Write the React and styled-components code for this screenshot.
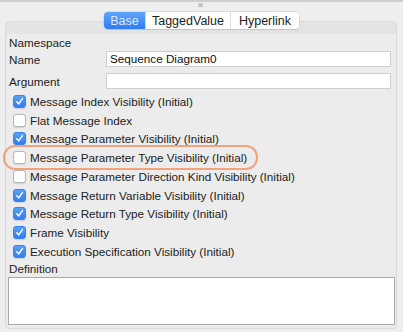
import styled, { createGlobalStyle } from 'styled-components';

const GlobalStyle = createGlobalStyle`
  html, body {
    margin: 0;
    padding: 0;
    background: #eeeeee;
  }
  body {
    font-family: "Liberation Sans", Arial, sans-serif;
    font-size: 11.7px;
    color: #222;
  }
`;

const Window = styled.div`
  width: 403px;
  height: 332px;
  box-sizing: border-box;
  position: relative;
  border-top: 2px solid #cfcfcf;
  background: #eeeeee;
  padding: 10px 6px 4px 5px;
`;

const Knob = styled.div`
  position: absolute;
  left: 198px;
  top: 1px;
  width: 5px;
  height: 4px;
  background: #c4c4c4;
  border-radius: 2px 2px 0 0;
`;

const Panel = styled.div`
  position: relative;
  height: 308px;
  box-sizing: border-box;
  margin-top: 9px;
  border: 1px solid #dadada;
  border-radius: 4px;
  background: linear-gradient(#e4e4e4 0, #e4e4e4 12px, #ececec 12px);
  padding: 13px 1px 3px 2px;
  display: flex;
  flex-direction: column;
`;

const Tabs = styled.div`
  position: absolute;
  top: -10px;
  left: 98px;
  display: flex;
  height: 17px;
  border-radius: 4px;
  background: #fff;
  box-shadow: 0 0 0 0.5px #c8c8c8, 0 1px 1px rgba(0, 0, 0, 0.15);
  overflow: hidden;
`;

const Tab = styled.div`
  display: flex;
  align-items: center;
  justify-content: center;
  width: ${(p) => p.$w}px;
  font-size: 12.5px;
  color: ${(p) => (p.$active ? '#dfeaff' : '#1d1d1d')};
  background: ${(p) => (p.$active ? 'linear-gradient(#5fa4fb, #2f7cf4)' : '#fff')};
  border-left: ${(p) => (p.$first ? 'none' : '1px solid #dcdcdc')};
`;

const Label = styled.div`
  height: 15px;
  line-height: 15px;
  padding-left: 1px;
`;

const FieldRow = styled.div`
  display: grid;
  grid-template-columns: 97px 1fr;
  align-items: center;
  height: 16px;
  margin: 1px 4px 5px 0;
  padding-left: 1px;
`;

const TextBox = styled.div`
  height: 16px;
  box-sizing: border-box;
  background: #fff;
  border: 1px solid #cfcfcf;
  padding: 0 3px;
  line-height: 14px;
  color: #111;
`;

const CheckList = styled.div`
  margin-top: -2px;
  display: flex;
  flex-direction: column;
`;

const CheckRow = styled.div`
  display: flex;
  align-items: center;
  gap: 4px;
  height: 18.75px;
  padding-left: 5px;
`;

const Box = styled.span`
  width: 13px;
  height: 13px;
  box-sizing: border-box;
  border-radius: 3px;
  display: inline-flex;
  align-items: center;
  justify-content: center;
  background: ${(p) => (p.$on ? 'linear-gradient(#5aa0fa, #2f7df5)' : '#fff')};
  border: 1px solid ${(p) => (p.$on ? '#3a83ef' : '#b9b9b9')};
  box-shadow: 0 0.5px 1px rgba(0, 0, 0, 0.12);
`;

const Highlight = styled.div`
  position: absolute;
  left: -3px;
  top: 123px;
  width: 255px;
  height: 25px;
  box-sizing: border-box;
  border: 2.5px solid #f3a27b;
  border-radius: 12px;
  pointer-events: none;
`;

const Definition = styled.div`
  height: 16px;
  line-height: 16px;
  padding-left: 1px;
`;

const TextArea = styled.div`
  flex: 1;
  background: #fff;
  border: 1px solid #a9a9a9;
`;

const checks = [
  ['Message Index Visibility (Initial)', true],
  ['Flat Message Index', false],
  ['Message Parameter Visibility (Initial)', true],
  ['Message Parameter Type Visibility (Initial)', false],
  ['Message Parameter Direction Kind Visibility (Initial)', false],
  ['Message Return Variable Visibility (Initial)', true],
  ['Message Return Type Visibility (Initial)', true],
  ['Frame Visibility', true],
  ['Execution Specification Visibility (Initial)', true],
];

function Check({ on }) {
  return (
    <Box $on={on}>
      {on && (
        <svg width="9" height="9" viewBox="0 0 9 9">
          <path d="M1.8 4.8 L3.7 6.9 L7.4 1.6" fill="none" stroke="#fff" strokeWidth="1.5" strokeLinecap="round" strokeLinejoin="round" />
        </svg>
      )}
    </Box>
  );
}

export default function App() {
  return (
    <>
      <GlobalStyle />
      <Window>
        <Knob />
        <Panel>
          <Tabs>
            <Tab $active $first $w={41}>Base</Tab>
            <Tab $w={84}>TaggedValue</Tab>
            <Tab $w={68}>Hyperlink</Tab>
          </Tabs>
          <Label>Namespace</Label>
          <FieldRow>
            <span>Name</span>
            <TextBox>Sequence Diagram0</TextBox>
          </FieldRow>
          <FieldRow>
            <span>Argument</span>
            <TextBox />
          </FieldRow>
          <CheckList>
            {checks.map(([text, on]) => (
              <CheckRow key={text}>
                <Check on={on} />
                <span>{text}</span>
              </CheckRow>
            ))}
          </CheckList>
          <Highlight />
          <Definition>Definition</Definition>
          <TextArea />
        </Panel>
      </Window>
    </>
  );
}
